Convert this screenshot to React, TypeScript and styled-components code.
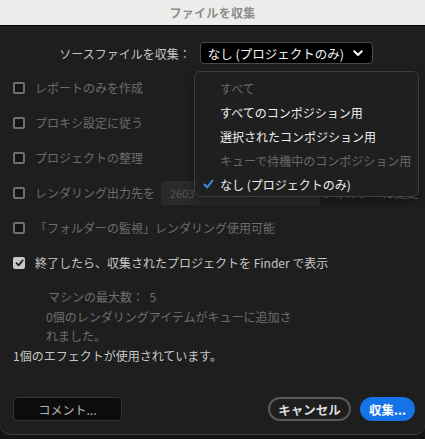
import React from "react";
import styled, { createGlobalStyle } from "styled-components";

const Global = createGlobalStyle`
  html, body { margin: 0; padding: 0; background: #141414; }
  body { font-family: "Noto Sans CJK JP", "Noto Sans", sans-serif; }
`;

const Screen = styled.div`
  width: 425px;
  height: 439px;
  display: flex;
  flex-direction: column;
  overflow: hidden;
  position: relative;
`;

const TitleBar = styled.div`
  height: 25px;
  flex: none;
  background: #ecedea;
  border-bottom: 1px solid #000;
  display: flex;
  align-items: center;
  justify-content: center;
  color: #8d8d8d;
  font-size: 12px;
  font-weight: 700;
  letter-spacing: 0.3px;
`;

const Body = styled.div`
  height: 408px;
  flex: none;
  background: #1e1e1e;
  border-radius: 0 0 10px 10px;
  box-shadow: 0 1px 0 #3c3c3c;
  display: flex;
  flex-direction: column;
  padding: 16px 10px 0 13px;
  box-sizing: border-box;
  position: relative;
`;

const SourceRow = styled.div`
  display: flex;
  align-items: center;
  justify-content: center;
  gap: 9px;
  height: 22px;
  padding-left: 4px;
`;

const SourceLabel = styled.span`
  color: #c4c4c4;
  font-size: 12px;
`;

const Select = styled.div`
  width: 173px;
  height: 22px;
  box-sizing: border-box;
  background: #000;
  border: 1px solid #4a4a4a;
  border-radius: 4px;
  display: flex;
  align-items: center;
  justify-content: space-between;
  padding: 0 9px 0 7px;
  color: #f2f2f2;
  font-size: 12.5px;
`;

const Options = styled.div`
  display: flex;
  flex-direction: column;
  margin-top: 6px;
`;

const OptionRow = styled.div`
  height: 35px;
  display: flex;
  align-items: center;
  gap: 10px;
`;

const Box = styled.span<{ $checked?: boolean }>`
  width: 12px;
  height: 12px;
  box-sizing: border-box;
  border-radius: 2px;
  flex: none;
  display: flex;
  align-items: center;
  justify-content: center;
  background: ${(p) => (p.$checked ? "#c9c9c9" : "#141414")};
  border: ${(p) => (p.$checked ? "none" : "2px solid #6f6f6f")};
`;

const Label = styled.span<{ $active?: boolean }>`
  color: ${(p) => (p.$active ? "#c6c6c6" : "#6c6c6c")};
  font-size: 12px;
  white-space: nowrap;
`;

const Field = styled.div`
  width: 159px;
  height: 24px;
  flex: none;
  background: #2a2a2a;
  border-radius: 3px;
  color: #575757;
  font-size: 11px;
  display: flex;
  align-items: center;
  padding-left: 9px;
  box-sizing: border-box;
  margin-left: -4px;
  margin-right: -8px;
`;

const Info = styled.div`
  margin-top: 7px;
  padding-left: 33px;
  color: #6e6e6e;
  font-size: 12px;
  line-height: 19.5px;
  width: 250px;
`;

const InfoFirst = styled.div`
  padding-left: 2px;
`;

const Effects = styled.div`
  color: #c8c8c8;
  font-size: 12px;
  line-height: 20px;
`;

const Footer = styled.div`
  margin-top: auto;
  margin-bottom: 13px;
  display: flex;
  align-items: center;
`;

const CommentButton = styled.button`
  width: 109px;
  height: 24px;
  background: #0c0c0c;
  border: 1px solid #343434;
  border-radius: 4px;
  color: #b8b8b8;
  font-family: inherit;
  font-size: 12px;
  padding: 0;
`;

const PillButton = styled.button<{ $primary?: boolean }>`
  height: 24px;
  box-sizing: border-box;
  border-radius: 12px;
  font-family: inherit;
  font-size: 12.5px;
  font-weight: 700;
  padding: 0;
  background: ${(p) => (p.$primary ? "#1473e6" : "transparent")};
  border: ${(p) => (p.$primary ? "none" : "2px solid #5a5a5a")};
  color: ${(p) => (p.$primary ? "#fff" : "#dcdcdc")};
  width: ${(p) => (p.$primary ? "55px" : "83px")};
`;

const Spacer = styled.div`
  flex: 1;
`;

const ButtonGap = styled.div`
  width: 9px;
`;

const Menu = styled.div`
  position: absolute;
  left: 194px;
  top: 45px;
  width: 225px;
  height: 126px;
  box-sizing: border-box;
  background: #1f1f1f;
  border: 1px solid #3e3e3e;
  border-radius: 6px;
  box-shadow: 0 4px 10px rgba(0, 0, 0, 0.35);
  padding-top: 4px;
  display: flex;
  flex-direction: column;
`;

const MenuItem = styled.div<{ $disabled?: boolean }>`
  height: 24px;
  display: flex;
  align-items: center;
  padding-left: 25px;
  position: relative;
  font-size: 12px;
  white-space: nowrap;
  color: ${(p) => (p.$disabled ? "#6a6a6a" : "#f0f0f0")};
`;

const Check = styled.svg`
  position: absolute;
  left: 8px;
  top: 7px;
`;

const Chevron = () => (
  <svg width="10" height="7" viewBox="0 0 10 7">
    <path d="M1.3 1.3 L5 5 L8.7 1.3" fill="none" stroke="#fff" strokeWidth="2" strokeLinecap="round" strokeLinejoin="round" />
  </svg>
);

const Tick = () => (
  <svg width="9" height="8" viewBox="0 0 9 8">
    <path d="M1.5 4.2 L3.6 6.3 L7.6 1.5" fill="none" stroke="#1e1e1e" strokeWidth="1.8" strokeLinecap="round" strokeLinejoin="round" />
  </svg>
);

const options = [
  "レポートのみを作成",
  "プロキシ設定に従う",
  "プロジェクトの整理",
];

export default function App() {
  return (
    <Screen>
      <Global />
      <TitleBar>ファイルを収集</TitleBar>
      <Body>
        <SourceRow>
          <SourceLabel>ソースファイルを収集：</SourceLabel>
          <Select>
            <span>なし (プロジェクトのみ)</span>
            <Chevron />
          </Select>
        </SourceRow>
        <Options>
          {options.map((o) => (
            <OptionRow key={o}>
              <Box />
              <Label>{o}</Label>
            </OptionRow>
          ))}
          <OptionRow>
            <Box />
            <Label>レンダリング出力先を</Label>
            <Field>2603</Field>
            <Label>フォルダーに変更</Label>
          </OptionRow>
          <OptionRow>
            <Box />
            <Label>「フォルダーの監視」レンダリング使用可能</Label>
          </OptionRow>
          <OptionRow>
            <Box $checked>
              <Tick />
            </Box>
            <Label $active>終了したら、収集されたプロジェクトを Finder で表示</Label>
          </OptionRow>
        </Options>
        <Info>
          <InfoFirst>マシンの最大数：&nbsp; 5</InfoFirst>
          <div>0個のレンダリングアイテムがキューに追加されました。</div>
        </Info>
        <Effects>1個のエフェクトが使用されています。</Effects>
        <Footer>
          <CommentButton>コメント...</CommentButton>
          <Spacer />
          <PillButton>キャンセル</PillButton>
          <ButtonGap />
          <PillButton $primary>収集...</PillButton>
        </Footer>
        <Menu>
          <MenuItem $disabled>すべて</MenuItem>
          <MenuItem>すべてのコンポジション用</MenuItem>
          <MenuItem>選択されたコンポジション用</MenuItem>
          <MenuItem $disabled>キューで待機中のコンポジション用</MenuItem>
          <MenuItem>
            <Check width="11" height="10" viewBox="0 0 11 10">
              <path d="M1.5 5.5 L4.2 8.3 L9.5 1.5" fill="none" stroke="#3d8fe6" strokeWidth="2" strokeLinecap="round" strokeLinejoin="round" />
            </Check>
            なし (プロジェクトのみ)
          </MenuItem>
        </Menu>
      </Body>
    </Screen>
  );
}
